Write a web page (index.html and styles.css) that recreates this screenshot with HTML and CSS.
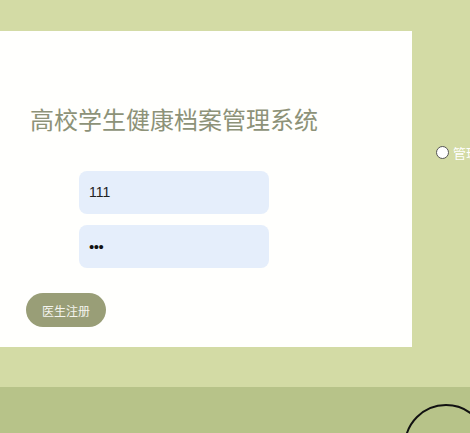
FILE: index.html
```html
<!DOCTYPE html>
<html lang="zh">
<head>
<meta charset="utf-8">
<link rel="stylesheet" href="styles.css">
</head>
<body>
<div class="page">
  <div class="main">
    <div class="card">
      <h1 class="title">高校学生健康档案管理系统</h1>
      <div class="field">111</div>
      <div class="field pwd">•••</div>
      <button class="reg">医生注册</button>
    </div>
    <div class="side">
      <label class="role"><span class="radio"></span><span class="role-text">管理员</span></label>
    </div>
  </div>
  <div class="band">
    <div class="ring"></div>
  </div>
</div>
</body>
</html>
```
FILE: styles.css
```css
html, body {
  margin: 0;
  padding: 0;
  background: #d3dba5;
  font-family: "Liberation Sans", Arial, "Noto Sans CJK SC", sans-serif;
  overflow: hidden;
}
.page {
  width: 470px;
  height: 433px;
  position: relative;
  overflow: hidden;
}
.main {
  display: flex;
  padding-top: 31px;
}
.card {
  flex: none;
  width: 412px;
  height: 316px;
  background: #fffffd;
  box-sizing: border-box;
  padding-top: 73px;
}
.title {
  margin: 0 0 37px 30px;
  font-size: 24px;
  line-height: 30px;
  font-weight: normal;
  color: #8d9278;
  font-family: "Microsoft YaHei", "Noto Sans CJK SC", sans-serif;
  letter-spacing: 0;
  white-space: nowrap;
}
.field {
  margin-left: 79px;
  width: 190px;
  height: 43px;
  box-sizing: border-box;
  border-radius: 8px;
  background: #e5eefb;
  padding-left: 10px;
  font-size: 14px;
  line-height: 43px;
  color: #222;
  margin-bottom: 11px;
}
.field.pwd {
  font-size: 15px;
  color: #111;
  letter-spacing: -0.5px;
  margin-bottom: 25px;
}
.reg {
  display: block;
  margin-left: 26px;
  width: 80px;
  height: 34px;
  border: none;
  border-radius: 17px;
  background: #999e77;
  color: #f4f4ee;
  font-size: 12px;
  font-family: "Microsoft YaHei", "Noto Sans CJK SC", sans-serif;
  padding: 0;
}
.side {
  flex: none;
  padding-left: 24px;
  padding-top: 112px;
}
.role {
  display: flex;
  align-items: center;
  gap: 4px;
  white-space: nowrap;
}
.radio {
  width: 11px;
  height: 11px;
  border: 1px solid #555;
  border-radius: 50%;
  background: #fff;
  flex: none;
}
.role-text {
  color: #fff;
  font-size: 13px;
  font-family: "Microsoft YaHei", "Noto Sans CJK SC", sans-serif;
}
.band {
  margin-top: 40px;
  height: 46px;
  background: #b7c389;
  position: relative;
}
.ring {
  position: absolute;
  left: 404px;
  top: 17px;
  width: 80px;
  height: 80px;
  border: 2px solid #111;
  border-radius: 50%;
}
```
